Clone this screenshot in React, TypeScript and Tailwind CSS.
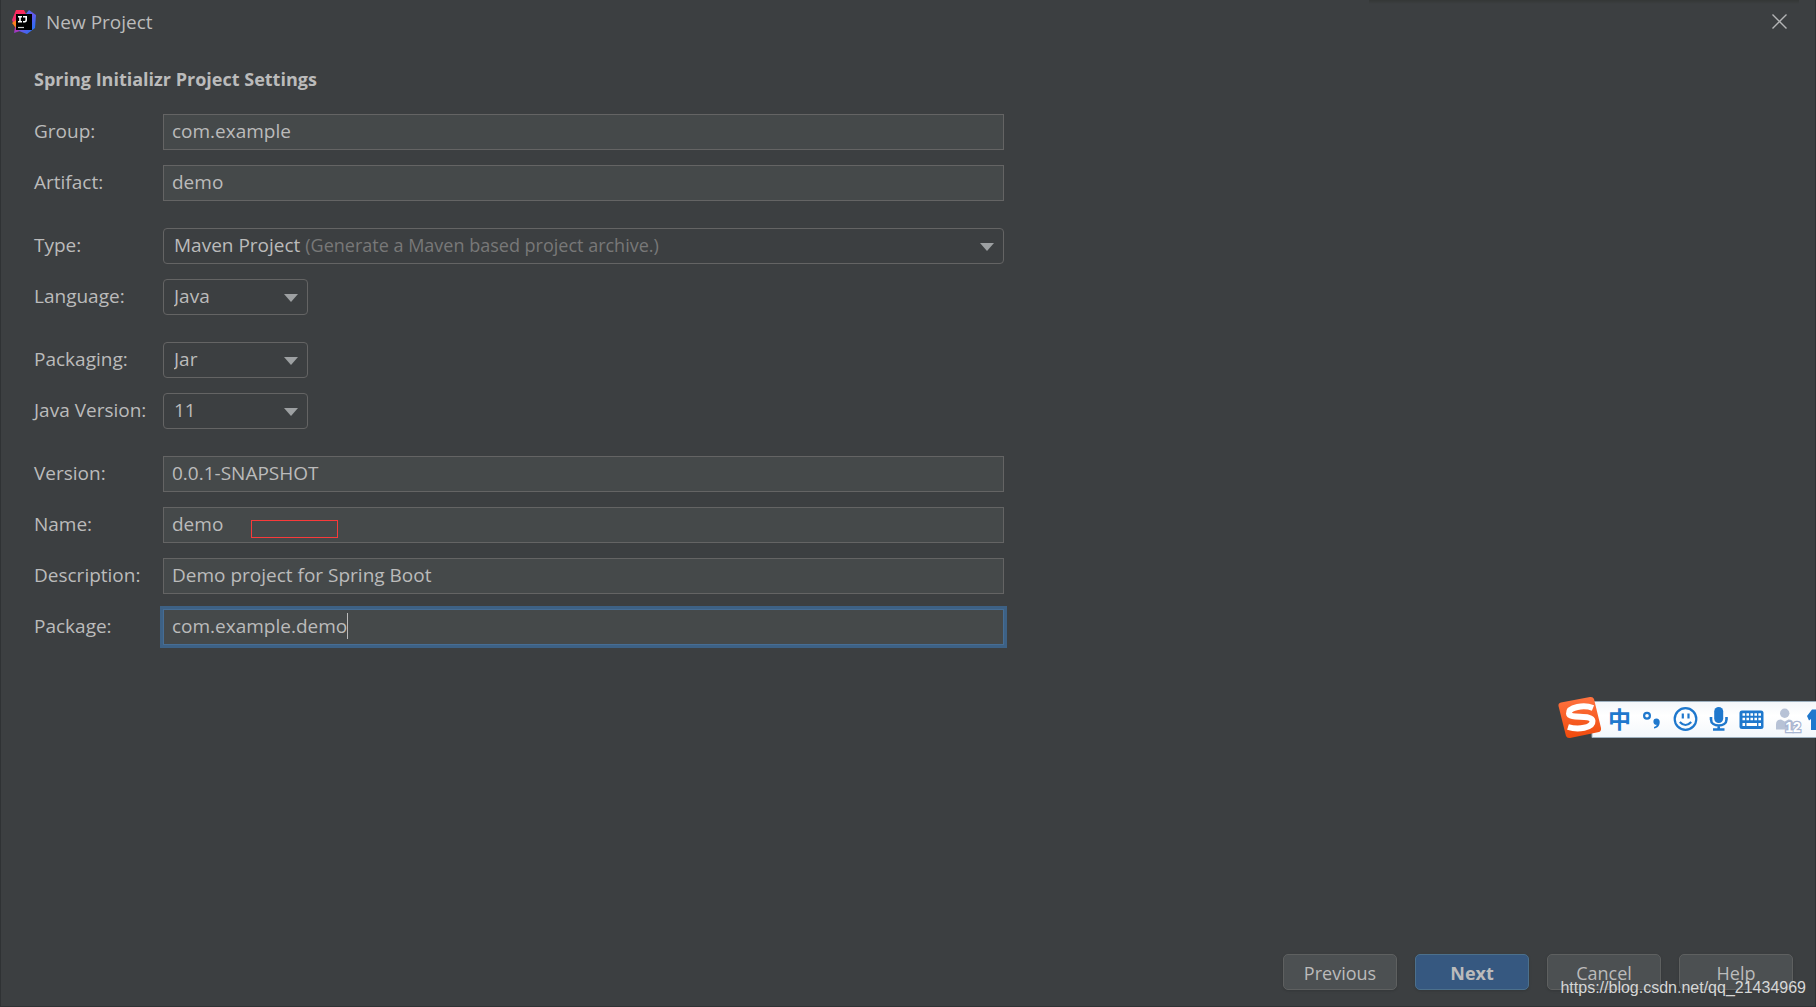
import { useState } from "react";
import type { ReactNode } from "react";

const defaults = {
  group: "com.example",
  artifact: "demo",
  version: "0.0.1-SNAPSHOT",
  name: "demo",
  description: "Demo project for Spring Boot",
  packageName: "com.example.demo",
};

type FieldKey = keyof typeof defaults;

function Row({ id, label, children }: { id: string; label: string; children: ReactNode }) {
  return (
    <div className="relative flex h-9 items-center">
      <label htmlFor={id} className="w-[129px] shrink-0 whitespace-nowrap pb-[2px]">
        {label}
      </label>
      {children}
    </div>
  );
}

function Group({ children }: { children: ReactNode }) {
  return <div className="flex flex-col gap-[15px]">{children}</div>;
}

function Select({ id, options, hint }: { id: string; options: string[]; hint?: string }) {
  return (
    <div className={hint ? "relative min-w-0 flex-1" : "relative w-[145px]"}>
      <select
        id={id}
        className="block h-9 w-full appearance-none rounded-[4px] border border-[#646464] bg-[#3c3f41] pb-[2px] pl-[10px] pr-8 outline-none"
      >
        {options.map((option) => (
          <option key={option}>{option}</option>
        ))}
      </select>
      {hint && (
        <div className="pointer-events-none absolute inset-0 flex items-center whitespace-pre pb-[2px] pl-[11px]">
          <span className="invisible">{options[0]} </span>
          <span className="text-lg leading-6 text-[#787878]">{hint}</span>
        </div>
      )}
      <svg
        viewBox="0 0 14 8"
        className="pointer-events-none absolute right-[10px] top-[15px] h-2 w-[14px] fill-[#9da0a2]"
        aria-hidden="true"
      >
        <path d="M0 0h14L7 8z" />
      </svg>
    </div>
  );
}

function IdeaLogo() {
  return (
    <svg viewBox="0 0 24 24" className="h-6 w-6" aria-hidden="true">
      <defs>
        <linearGradient id="idea-left" x1="0" y1="0" x2="0" y2="1">
          <stop offset="0" stopColor="#fe2857" />
          <stop offset="0.6" stopColor="#e83278" />
          <stop offset="1" stopColor="#9039d0" />
        </linearGradient>
        <linearGradient id="idea-right" x1="0" y1="0" x2="1" y2="1">
          <stop offset="0" stopColor="#2b7bf5" />
          <stop offset="0.5" stopColor="#6757e8" />
          <stop offset="1" stopColor="#087cfa" />
        </linearGradient>
      </defs>
      <path d="M4 0h8l2 4v16l-6 1-6 2 1-6-3-7z" fill="url(#idea-left)" />
      <path d="M0 13l4-3v8z" fill="#fc801d" />
      <path d="M17 0l7 5-1 13-8 6-8-3 6-16z" fill="url(#idea-right)" />
      <rect x="4" y="4" width="16" height="16" fill="#000" />
      <path
        d="M6 6.700h4M8 6.700v5M6 11.800h4M11 6.700h3.200v3.500q0 1.800-3.200 1.500"
        stroke="#fff"
        strokeWidth="1.600"
        fill="none"
      />
      <path d="M6 17.500h6" stroke="#ccc" strokeWidth="1.200" />
    </svg>
  );
}

function InputMethodBar() {
  return (
    <svg
      viewBox="0 0 258 43"
      className="absolute -right-px top-[696px] h-[43px] w-[258px]"
      role="img"
      aria-label="Input method toolbar"
    >
      <defs>
        <linearGradient id="sogou" x1="0" y1="0" x2="0" y2="1">
          <stop offset="0" stopColor="#ff7340" />
          <stop offset="1" stopColor="#f04a0c" />
        </linearGradient>
        <linearGradient id="bar" x1="0" y1="0" x2="0" y2="1">
          <stop offset="0" stopColor="#f4f7fa" />
          <stop offset="0.4" stopColor="#ffffff" />
          <stop offset="1" stopColor="#f3f7fb" />
        </linearGradient>
      </defs>
      <path d="M34 5.500h226v36H34z" fill="url(#bar)" stroke="#9db0bf" />
      <path d="M3 6.500L32 1q3-.5 4 2l7 29q.5 3-2 4l-29 6q-3 .5-4-2L.5 10q-.5-3 2.500-3.500z" fill="url(#sogou)" />
      <path
        d="M35 12C26 8.500 10.500 11 11 17.500 11.500 23.500 34 18 34.500 25 35 32 20 34 10 31"
        fill="none"
        stroke="#fff"
        strokeWidth="6"
      />
      <text
        x="61.500"
        y="32"
        textAnchor="middle"
        className="fill-[#1f78cd] font-['Noto_Sans_CJK_SC',sans-serif] text-[23px] font-bold"
      >
        中
      </text>
      <g fill="none" stroke="#1f78cd" strokeWidth="2.200">
        <circle cx="89" cy="19.700" r="2.900" />
        <circle cx="127.500" cy="23" r="10.800" />
        <path d="M124.800 17.500v5M130.500 17.500v5M121.800 26q5.700 6 11.400 0" />
        <path d="M153 21v2.500c0 8 15.500 8 15.500 0V21M160.700 30v4M155 33.500h11.500" strokeWidth="2.600" />
      </g>
      <g fill="#1f78cd">
        <path d="M98.500 22.500a3.200 3.200 0 0 1 3.200 3.500c0 3.500-2 6-5.700 6.500v-1.500c1.800-.5 2.500-1.300 2.600-2.200a3.150 3.150 0 1 1-.1-6.300z" />
        <rect x="156.200" y="11" width="9" height="16" rx="4.500" />
        <rect x="181.500" y="14.500" width="24" height="18.500" rx="2.500" />
        <path d="M249 20l5-6.500h4V34h-5V23l-2 1.500z" />
      </g>
      <path
        d="M184.500 18.500h18.500M184.500 23h18.500"
        stroke="#fff"
        strokeWidth="2.600"
        strokeDasharray="2.600 1.370"
      />
      <path d="M184.500 28.500h2.600M188.500 28.500h10.500M200.400 28.500h2.600" stroke="#fff" strokeWidth="3" />
      <g fill="#b7c2d6">
        <circle cx="226.700" cy="17.300" r="4.700" />
        <path d="M218 33.500v-5q0-5 5-5l3.700 2 3.700-2q5 0 5 5v5z" />
      </g>
      <text
        x="235"
        y="36"
        textAnchor="middle"
        stroke="#a9b6d2"
        strokeWidth="2.500"
        paintOrder="stroke"
        className="fill-white font-['Liberation_Sans',sans-serif] text-[14px] font-bold"
      >
        12
      </text>
    </svg>
  );
}

function Button({ label, primary = false }: { label: string; primary?: boolean }) {
  return (
    <button
      type="button"
      className={
        primary
          ? "h-9 w-[114px] rounded-[5px] border border-[#4c708c] bg-[#365880] pt-[2px] text-lg leading-6 font-bold shadow-sm"
          : "h-9 w-[114px] rounded-[5px] border border-[#5e6060] bg-[#4c5052] pt-[2px] text-lg leading-6 shadow-sm"
      }
    >
      {label}
    </button>
  );
}

export default function App() {
  const [values, setValues] = useState(defaults);

  function field(key: FieldKey, label: string, overlay?: ReactNode) {
    const focused = key === "packageName";
    return (
      <Row id={key} label={label}>
        <input
          id={key}
          type="text"
          value={values[key]}
          onChange={(e) => setValues({ ...values, [key]: e.target.value })}
          className={
            focused
              ? "h-9 min-w-0 flex-1 border border-[#466d94] bg-[#45494a] pb-[2px] pl-2 outline-none ring-3 ring-[#3d6185]"
              : "h-9 min-w-0 flex-1 border border-[#646464] bg-[#45494a] pb-[2px] pl-2 outline-none"
          }
        />
        {overlay}
      </Row>
    );
  }

  return (
    <div className="relative flex min-h-screen flex-col border-x border-b border-[#2f3234] bg-[#3c3f41] font-['Open_Sans','Noto_Sans',sans-serif] text-[19px] leading-6 text-[#bbbbbb]">
      <div className="absolute right-4 top-0 h-1 w-[430px] bg-linear-to-b from-[#343736] to-[#3c3f41]" />
      <header className="flex h-11 items-center gap-[10px] pl-[11px] pr-7">
        <IdeaLogo />
        <h1 className="flex-1">New Project</h1>
        <button type="button" aria-label="Close">
          <svg viewBox="0 0 15 15" className="mb-[2px] h-[15px] w-[15px]" fill="none" stroke="#b4b5b6" strokeWidth="1.400">
            <path d="M.5.5l14 14M14.500.5l-14 14" />
          </svg>
        </button>
      </header>

      <main className="flex max-w-[1003px] flex-1 flex-col gap-[27px] pl-[33px] pt-[23px]">
        <Group>
          <h2 className="mb-2 text-lg leading-6 font-bold">Spring Initializr Project Settings</h2>
          {field("group", "Group:")}
          {field("artifact", "Artifact:")}
        </Group>
        <Group>
          <Row id="type" label="Type:">
            <Select id="type" options={["Maven Project"]} hint="(Generate a Maven based project archive.)" />
          </Row>
          <Row id="language" label="Language:">
            <Select id="language" options={["Java", "Kotlin", "Groovy"]} />
          </Row>
        </Group>
        <Group>
          <Row id="packaging" label="Packaging:">
            <Select id="packaging" options={["Jar", "War"]} />
          </Row>
          <Row id="javaVersion" label="Java Version:">
            <Select id="javaVersion" options={["11", "8"]} />
          </Row>
        </Group>
        <Group>
          {field("version", "Version:")}
          {field(
            "name",
            "Name:",
            <div className="pointer-events-none absolute left-[217px] top-[13px] h-[18px] w-[87px] border border-[#f93a3a]" />
          )}
          {field("description", "Description:")}
          {field(
            "packageName",
            "Package:",
            <div className="pointer-events-none absolute left-[138px] top-1 flex h-[26px]">
              <span className="invisible">{values.packageName}</span>
              <span className="w-px bg-[#bbbbbb]" />
            </div>
          )}
        </Group>
      </main>

      <footer className="flex justify-end gap-[18px] pb-4 pr-[22px]">
        <Button label="Previous" />
        <Button label="Next" primary />
        <Button label="Cancel" />
        <Button label="Help" />
      </footer>

      <InputMethodBar />
      <div className="pointer-events-none absolute bottom-2 right-[9px] font-['Liberation_Sans',sans-serif] text-base leading-5 text-[#d6d7d7]">
        https://blog.csdn.net/qq_21434969
      </div>
    </div>
  );
}
